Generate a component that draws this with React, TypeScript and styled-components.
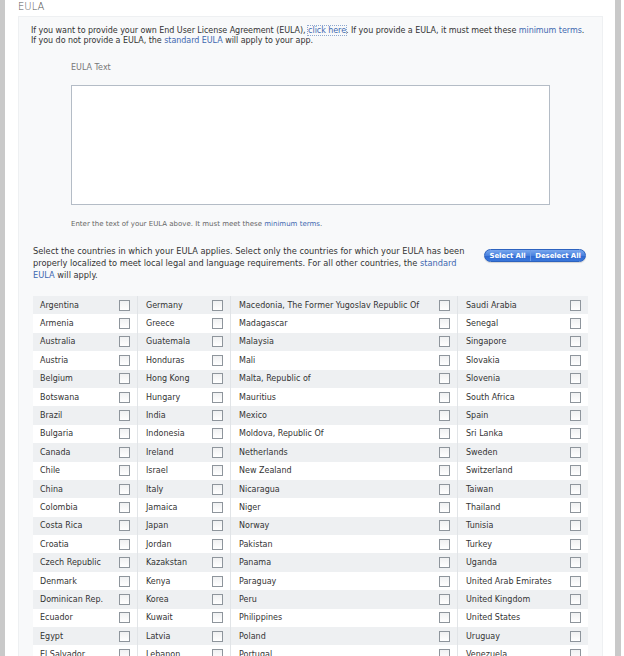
import React from "react";
import styled, { createGlobalStyle } from "styled-components";

const Global = createGlobalStyle`
  html, body { margin: 0; padding: 0; background: #ffffff; }
  body { font-family: "DejaVu Sans", Verdana, sans-serif; color: #333; }
`;

const Frame = styled.div`
  width: 610px;
  min-height: 656px;
  border-left: 5px solid #c9c9c9;
  border-right: 6px solid #c9c9c9;
  background: #fff;
  box-sizing: content-box;
`;

const Title = styled.div`
  padding: 1px 0 0 13px;
  height: 15px;
  font-size: 10px;
  line-height: 12px;
  font-weight: 200;
  color: #555;
`;

const Box = styled.div`
  margin: 0 12px 0 13px;
  background: #f8f9fa;
  border: 1px solid #eef0f2;
  border-bottom: none;
  padding: 9px 6px 40px 12px;
`;

const Intro = styled.p`
  margin: 0;
  font-size: 8px;
  line-height: 10px;
  letter-spacing: -0.05px;
  color: #333;
`;

const Link = styled.a`
  color: #3e68b0;
  text-decoration: none;
`;

const FocusLink = styled(Link)`
  outline: 1px dotted #8fa8cf;
  outline-offset: 0px;
`;

const EulaSection = styled.div`
  margin: 17px 0 0 40px;
  display: flex;
  flex-direction: column;
`;

const Label = styled.div`
  font-size: 8px;
  line-height: 10px;
  color: #777;
`;

const TextArea = styled.div`
  margin-top: 12px;
  width: 479px;
  height: 120px;
  box-sizing: border-box;
  background: #fff;
  border: 1px solid #b4bcc6;
`;

const Hint = styled.div`
  margin-top: 14px;
  font-size: 7px;
  line-height: 10px;
  color: #666;
`;

const SelectRow = styled.div`
  margin-top: 16px;
  padding-left: 2px;
  display: flex;
  align-items: flex-start;
`;

const SelectText = styled.p`
  margin: 0;
  width: 440px;
  font-size: 8.25px;
  line-height: 12px;
  color: #333;
`;

const ButtonGroup = styled.div`
  margin: 4px 0 0 11px;
  display: flex;
  height: 13px;
  border-radius: 7px;
  overflow: hidden;
  border: 1px solid #2d63bf;
  box-sizing: border-box;
  background: linear-gradient(#79a7ee 0%, #4a82df 50%, #2f68cf 51%, #3b78dc 100%);
  box-shadow: 0 1px 1px rgba(0, 0, 0, 0.15);
`;

const Btn = styled.span<{ $w: number; $divider?: boolean }>`
  width: ${(p) => p.$w}px;
  display: flex;
  align-items: center;
  justify-content: center;
  font-size: 7px;
  font-weight: bold;
  color: #fff;
  letter-spacing: -0.1px;
  ${(p) => (p.$divider ? "border-left: 1px solid #6d9be6;" : "")}
`;

const Table = styled.div`
  margin: 15px 0 0 2px;
  width: 555px;
  display: flex;
  flex-direction: column;
`;

const Row = styled.div<{ $shade: boolean }>`
  height: 18.4px;
  display: grid;
  grid-template-columns: 104px 93px 227px 131px;
  background: ${(p) => (p.$shade ? "#eef0f2" : "#ffffff")};
`;

const Cell = styled.div<{ $first: boolean }>`
  display: flex;
  align-items: center;
  justify-content: space-between;
  padding: 0 7px 0 ${(p) => (p.$first ? 7 : 8)}px;
  ${(p) => (p.$first ? "" : "border-left: 1px solid #e1e4e7;")}
  font-size: 8px;
  color: #333;
  white-space: nowrap;
`;

const Check = styled.span`
  width: 9px;
  height: 9px;
  border: 1px solid #8e959c;
  background: linear-gradient(#f0f1f2, #ffffff);
  flex: none;
`;

const columns: string[][] = [
  [
    "Argentina", "Armenia", "Australia", "Austria", "Belgium", "Botswana", "Brazil",
    "Bulgaria", "Canada", "Chile", "China", "Colombia", "Costa Rica", "Croatia",
    "Czech Republic", "Denmark", "Dominican Rep.", "Ecuador", "Egypt", "El Salvador",
  ],
  [
    "Germany", "Greece", "Guatemala", "Honduras", "Hong Kong", "Hungary", "India",
    "Indonesia", "Ireland", "Israel", "Italy", "Jamaica", "Japan", "Jordan",
    "Kazakstan", "Kenya", "Korea", "Kuwait", "Latvia", "Lebanon",
  ],
  [
    "Macedonia, The Former Yugoslav Republic Of", "Madagascar", "Malaysia", "Mali",
    "Malta, Republic of", "Mauritius", "Mexico", "Moldova, Republic Of", "Netherlands",
    "New Zealand", "Nicaragua", "Niger", "Norway", "Pakistan", "Panama", "Paraguay",
    "Peru", "Philippines", "Poland", "Portugal",
  ],
  [
    "Saudi Arabia", "Senegal", "Singapore", "Slovakia", "Slovenia", "South Africa",
    "Spain", "Sri Lanka", "Sweden", "Switzerland", "Taiwan", "Thailand", "Tunisia",
    "Turkey", "Uganda", "United Arab Emirates", "United Kingdom", "United States",
    "Uruguay", "Venezuela",
  ],
];

export default function App() {
  const rows = columns[0].map((_, i) => columns.map((c) => c[i]));
  return (
    <>
      <Global />
      <Frame>
        <Title>EULA</Title>
        <Box>
          <Intro>
            If you want to provide your own End User License Agreement (EULA),{" "}
            <FocusLink href="#">click here</FocusLink>. If you provide a EULA, it must meet these{" "}
            <Link href="#">minimum terms</Link>.
            <br />
            If you do not provide a EULA, the <Link href="#">standard EULA</Link> will apply to your app.
          </Intro>
          <EulaSection>
            <Label>EULA Text</Label>
            <TextArea />
            <Hint>
              Enter the text of your EULA above. It must meet these <Link href="#">minimum terms</Link>.
            </Hint>
          </EulaSection>
          <SelectRow>
            <SelectText>
              Select the countries in which your EULA applies. Select only the countries for which your EULA has been
              properly localized to meet local legal and language requirements. For all other countries, the{" "}
              <Link href="#">standard EULA</Link> will apply.
            </SelectText>
            <ButtonGroup>
              <Btn $w={45}>Select All</Btn>
              <Btn $w={54} $divider>
                Deselect All
              </Btn>
            </ButtonGroup>
          </SelectRow>
          <Table>
            {rows.map((r, i) => (
              <Row key={i} $shade={i % 2 === 0}>
                {r.map((name, j) => (
                  <Cell key={j} $first={j === 0}>
                    <span>{name}</span>
                    <Check />
                  </Cell>
                ))}
              </Row>
            ))}
          </Table>
        </Box>
      </Frame>
    </>
  );
}
